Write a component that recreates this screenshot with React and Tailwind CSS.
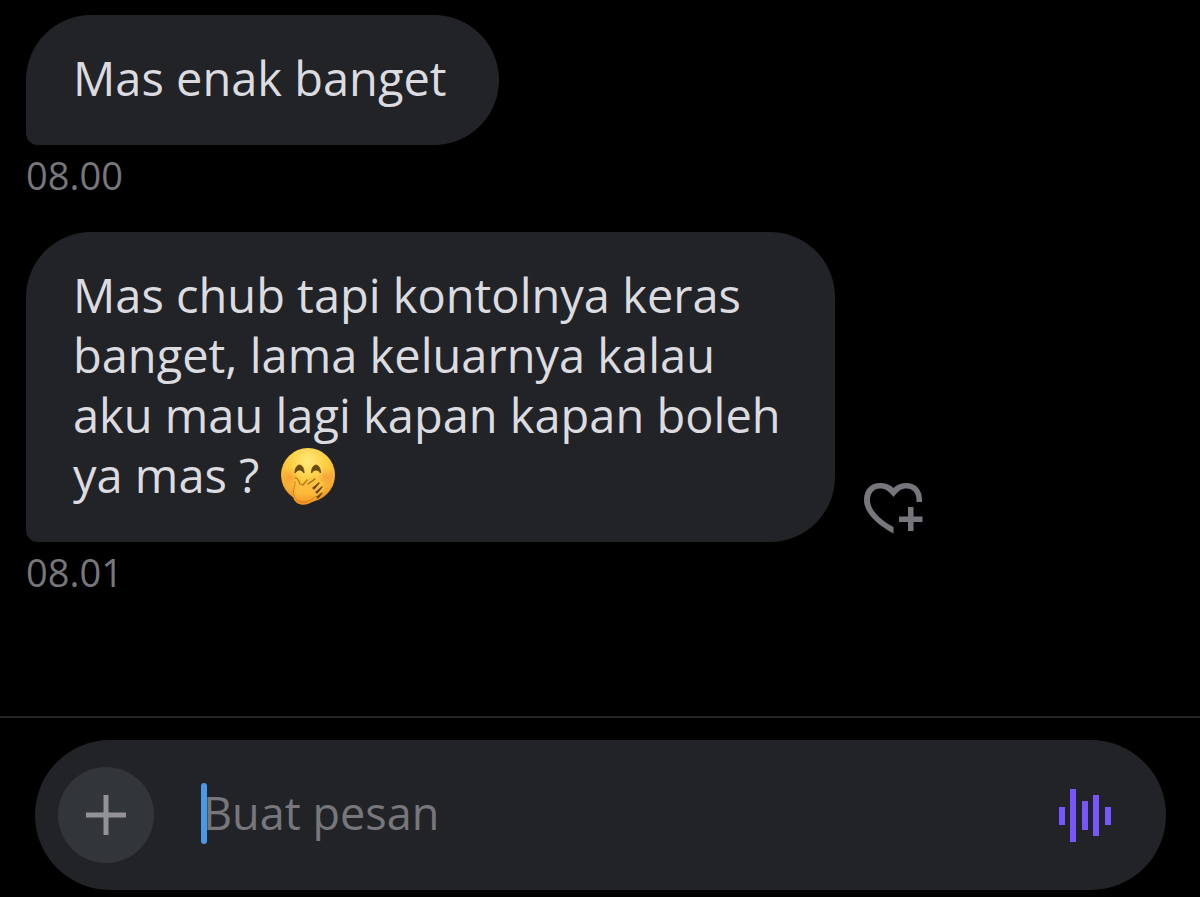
import { useState } from 'react';

const MESSAGES = [
  { id: 1, text: 'Mas enak banget', time: '08.00' },
  {
    id: 2,
    text: 'Mas chub tapi kontolnya keras banget, lama keluarnya kalau aku mau lagi kapan kapan boleh ya mas ? ',
    time: '08.01',
    emoji: true,
    canReact: true,
  },
];

const GiggleEmoji = () => (
  <svg
    role="img"
    aria-label="🤭"
    viewBox="0 0 56 58"
    className="-mt-3 -mb-1 ml-2 inline-block h-[58px] w-14 align-middle"
  >
    <defs>
      <radialGradient id="face" cx="0.5" cy="0.25" r="0.75">
        <stop offset="0" stopColor="#ffea7a" />
        <stop offset="0.5" stopColor="#fdcb3f" />
        <stop offset="0.85" stopColor="#f7a930" />
        <stop offset="1" stopColor="#e58a22" />
      </radialGradient>
      <radialGradient id="blush">
        <stop offset="0" stopColor="#f4713a" stopOpacity="0.4" />
        <stop offset="1" stopColor="#f4713a" stopOpacity="0" />
      </radialGradient>
      <linearGradient id="hand" x1="0" y1="0" x2="0" y2="1">
        <stop offset="0" stopColor="#fdc645" />
        <stop offset="0.6" stopColor="#fdb93a" />
        <stop offset="1" stopColor="#f09423" />
      </linearGradient>
    </defs>
    <circle cx="28" cy="28" r="27" fill="url(#face)" />
    <circle cx="10" cy="30" r="9" fill="url(#blush)" />
    <circle cx="46" cy="30" r="9" fill="url(#blush)" />
    {/* Eyes */}
    <path d="M15 26c0-10.500 9-10.500 9 0-2.500-4-6.500-4-9 0Z" fill="#6b4a12" stroke="#6b4a12" strokeLinejoin="round" />
    <path d="M31.500 26c0-10.500 9-10.500 9 0-2.500-4-6.500-4-9 0Z" fill="#6b4a12" stroke="#6b4a12" strokeLinejoin="round" />
    {/* Hand */}
    <path
      d="M15 31c2-2 5 2 6 6l11-7c3-2 5 0 3 2l-2 2 3-2c3-1 5 1 3 3l2-1c3 0 4 2 2 4l-2 2c3-1 4 1 3 3-4 5-6 8-10 11-6 4-12 5-17 2-5-4-4-8-3-13 1-4-1-8 1-12Z"
      fill="url(#hand)"
    />
    <path d="M15 31c2-1 4 3 5 6l3 1 4-5" fill="none" stroke="#b87a1a" strokeWidth="1.3" strokeLinecap="round" strokeLinejoin="round" />
    <path d="M28 37l7-5" fill="none" stroke="#a66c1c" strokeWidth="1.3" strokeLinecap="round" />
    <path d="M33 41l6-5-5 6ZM36 45l6-5-5 6ZM37 50l5-4-4 5Z" fill="#6b4a12" stroke="#6b4a12" strokeWidth="1.2" strokeLinejoin="round" />
    <path d="M15 34c1 4-3 9-1 14 1 5 5 8 11 7 5-1 8-3 11-6" fill="none" stroke="#dd7820" strokeWidth="1" />
  </svg>
);

const HeartPlusIcon = () => (
  <svg viewBox="0 0 60 52" className="h-13 w-15 fill-[#76767d]" aria-hidden="true">
    <path d="M29.500 50.500C10 40 0 28 0 17 0 6 7 0 16 0c5.500 0 10 1.500 13.500 5C33 1.500 37.500 0 42.500 0 51.500 0 58 6.500 58 16.500V19h-5.500v-2.500c0-6.500-4-11-10-11-5 0-8.500 2.500-13 8.500-4.500-6-8.500-8.500-13.500-8.500-6 0-10 4.500-10 11.500 0 9 8 18.500 23.500 27Z" />
    <path d="M44 24h5.500v9.500h9V39h-9v9H44v-9h-9v-5.500h9Z" />
  </svg>
);

const VoiceIcon = () => (
  <svg viewBox="0 0 54 56" className="h-14 w-[54px] fill-[#7856ff]" aria-hidden="true">
    <rect x="1" y="20" width="6" height="18" />
    <rect x="12" y="2" width="6" height="53" />
    <rect x="24" y="14" width="6" height="29" />
    <rect x="35" y="8" width="6" height="41" />
    <rect x="47" y="20" width="6" height="18" />
  </svg>
);

const Message = ({ message }) => (
  <li>
    <div className="flex items-end gap-[29px]">
      <p className="max-w-[809px] rounded-[65px] rounded-bl-xl bg-[#222327] pt-[33px] pr-[52px] pb-[37px] pl-[47px] text-[47px] leading-[60px] text-[#dcdce0]">
        {message.text}
        {message.emoji && <GiggleEmoji />}
      </p>
      {message.canReact && (
        <button type="button" aria-label="Tambahkan reaksi" className="mb-[7px] shrink-0">
          <HeartPlusIcon />
        </button>
      )}
    </div>
    <time className="mt-[10px] block text-[38px] leading-10 text-[#76767b]">{message.time}</time>
  </li>
);

const Composer = () => {
  const [draft, setDraft] = useState('');

  return (
    <footer className="border-t-2 border-[#232325] pt-[22px] pr-[34px] pb-[7px] pl-[35px]">
      <form
        onSubmit={(e) => e.preventDefault()}
        className="flex h-[150px] items-center rounded-full bg-[#222327] pr-[54px] pl-[23px]"
      >
        <button
          type="button"
          aria-label="Tambah lampiran"
          className="flex size-24 shrink-0 items-center justify-center rounded-full bg-[#323639]"
        >
          <svg viewBox="0 0 40 40" className="size-10 fill-[#929297]" aria-hidden="true">
            <path d="M17.500 0h5v17.500H40v5H22.500V40h-5V22.500H0v-5h17.500Z" />
          </svg>
        </button>
        {/* Caret */}
        <span className="mb-1 ml-[47px] h-[61px] w-1.5 shrink-0 rounded-full bg-[#4a99e9]" />
        <input
          type="text"
          aria-label="Buat pesan"
          placeholder="Buat pesan"
          value={draft}
          onChange={(e) => setDraft(e.target.value)}
          className="mb-1 -ml-1 h-[60px] min-w-0 flex-1 bg-transparent text-[45px] text-[#dcdce0] caret-[#4a99e9] outline-none placeholder:text-[#76767b]"
        />
        <button type="button" aria-label="Pesan suara" className="shrink-0">
          <VoiceIcon />
        </button>
      </form>
    </footer>
  );
};

const App = () => (
  <div className="flex min-h-screen flex-col bg-black font-['Open_Sans',sans-serif]">
    <main className="flex-1 px-[26px] pt-[15px]">
      <ul className="flex flex-col gap-[37px]">
        {MESSAGES.map((message) => (
          <Message key={message.id} message={message} />
        ))}
      </ul>
    </main>
    <Composer />
  </div>
);

export default App;
